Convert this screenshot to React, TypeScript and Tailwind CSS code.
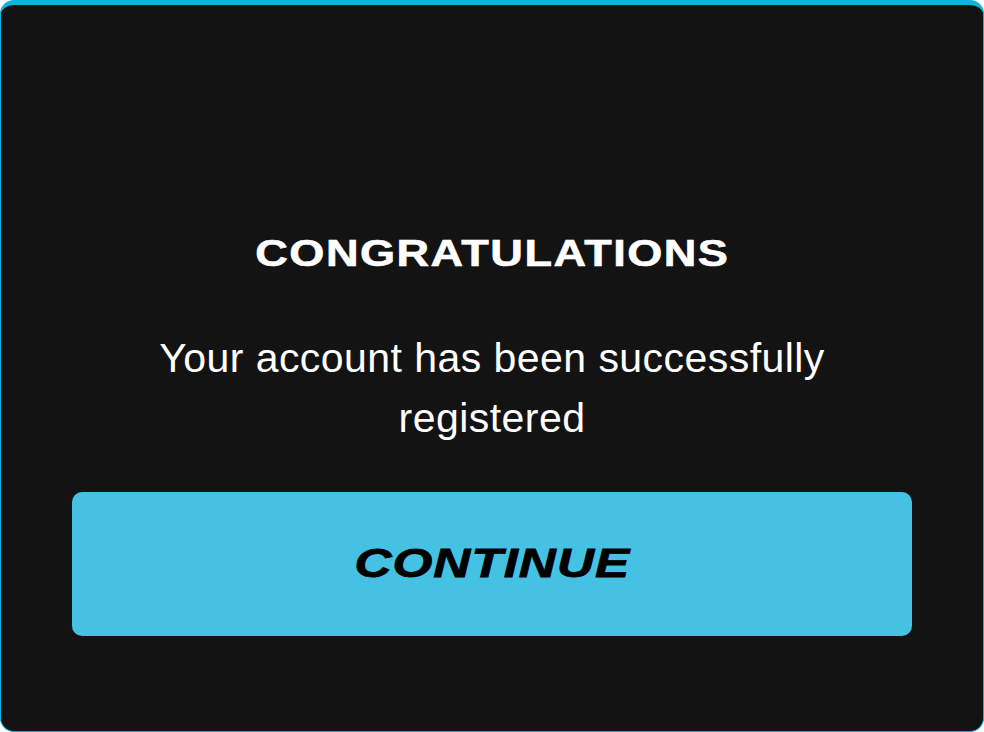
export default function App() {
  return (
    <div className="flex h-[732px] w-[984px] flex-col items-center rounded-[14px] border border-t-[5px] border-[#0cb5dc] bg-[#131313] px-[71px] pt-[221px] font-['Liberation_Sans',Arial,sans-serif]">
      <h1 className="scale-x-[1.22] text-[37px] font-black leading-[56px] tracking-[1.2px] text-white [-webkit-text-stroke:0.6px_white]">
        CONGRATULATIONS
      </h1>
      <p className="mt-[46px] w-[720px] text-center text-[41px] leading-[60px] tracking-[0.45px] text-white">
        Your account has been successfully registered
      </p>
      <button className="mt-[44px] flex h-[144px] w-full items-center justify-center rounded-[10px] bg-[#44c1e3]">
        <span className="scale-x-[1.25] text-[41px] font-black italic tracking-[0.8px] text-black [-webkit-text-stroke:0.8px_black]">
          CONTINUE
        </span>
      </button>
    </div>
  );
}
